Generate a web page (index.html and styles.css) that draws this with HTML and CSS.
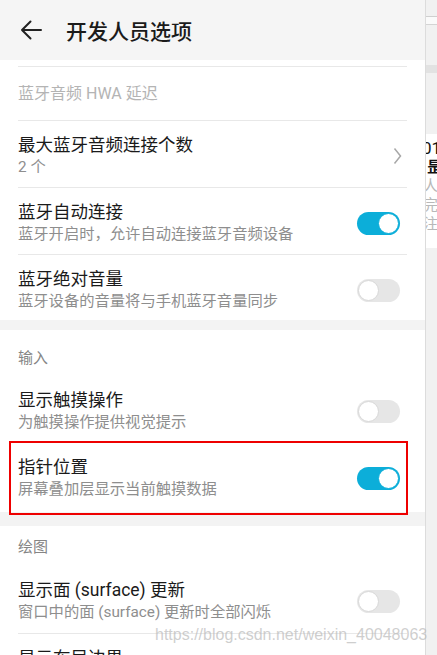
FILE: index.html
```html
<!DOCTYPE html>
<html lang="zh-CN">
<head>
  <meta charset="UTF-8">
  <meta name="viewport" content="width=device-width, initial-scale=1.0">
  <title>开发人员选项</title>
  <link rel="stylesheet" href="styles.css">
</head>
<body>
  <div class="screen">
    <div class="phone">
      <header class="topbar">
        <svg class="back" width="22" height="20" viewBox="0 0 22 20">
          <path d="M21 10H2 M10.5 1.5 L2 10 L10.5 18.5" fill="none" stroke="#222" stroke-width="2" stroke-linecap="round" stroke-linejoin="round"/>
        </svg>
        <h1>开发人员选项</h1>
      </header>

      <div class="card first">
        <div class="row disabled">
          <div class="text"><div class="title">蓝牙音频 HWA 延迟</div></div>
        </div>
        <div class="row">
          <div class="text">
            <div class="title">最大蓝牙音频连接个数</div>
            <div class="sub">2 个</div>
          </div>
          <svg class="chevron" width="9" height="18" viewBox="0 0 9 18">
            <path d="M1.5 1.5 L7.5 9 L1.5 16.5" fill="none" stroke="#a8a8a8" stroke-width="1.5"/>
          </svg>
        </div>
        <div class="row">
          <div class="text">
            <div class="title">蓝牙自动连接</div>
            <div class="sub">蓝牙开启时，允许自动连接蓝牙音频设备</div>
          </div>
          <span class="switch on"></span>
        </div>
        <div class="row last">
          <div class="text">
            <div class="title">蓝牙绝对音量</div>
            <div class="sub">蓝牙设备的音量将与手机蓝牙音量同步</div>
          </div>
          <span class="switch"></span>
        </div>
      </div>

      <div class="card input">
        <div class="label">输入</div>
        <div class="row top">
          <div class="text">
            <div class="title">显示触摸操作</div>
            <div class="sub">为触摸操作提供视觉提示</div>
          </div>
          <span class="switch"></span>
        </div>
        <div class="row marked">
          <div class="text">
            <div class="title">指针位置</div>
            <div class="sub">屏幕叠加层显示当前触摸数据</div>
          </div>
          <span class="switch on"></span>
          <div class="highlight"></div>
        </div>
      </div>

      <div class="card draw">
        <div class="label">绘图</div>
        <div class="row top">
          <div class="text">
            <div class="title">显示面 (surface) 更新</div>
            <div class="sub">窗口中的面 (surface) 更新时全部闪烁</div>
          </div>
          <span class="switch"></span>
        </div>
        <div class="row">
          <div class="text">
            <div class="title">显示布局边界</div>
            <div class="sub">显示剪辑边界、边距等。</div>
          </div>
          <span class="switch"></span>
        </div>
      </div>
    </div>

    <div class="side">
      <div class="side-bar"></div>
      <div class="side-band"></div>
      <div class="side-panel">
        <div class="s-num">01</div>
        <div class="s-bold">昰</div>
        <div class="s-grey">人</div>
        <div class="s-grey">完</div>
        <div class="s-grey">注</div>
      </div>
    </div>

    <div class="watermark">https://blog.csdn.net/weixin_40048063</div>
  </div>
</body>
</html>
```

FILE: styles.css
```css
body {
  margin: 0;
  font-family: Roboto, "Noto Sans CJK SC", sans-serif;
  background: #f1f1f1;
}

.screen {
  position: relative;
  display: flex;
  width: 437px;
  height: 655px;
  overflow: hidden;
}

.phone {
  width: 425px;
  flex-shrink: 0;
  background: #f3f3f3;
}

/* top bar */
.topbar {
  height: 60px;
  display: flex;
  align-items: center;
  padding-left: 20px;
  background: #f5f5f5;
}

.topbar .back {
  margin-right: 24px;
}

.topbar h1 {
  margin: 0;
  font-size: 21px;
  font-weight: 500;
  color: #1b1b1b;
}

/* cards + rows */
.card {
  background: #fff;
}

.card.first {
  padding-top: 6px;
  margin-bottom: 10px;
}

.card.input {
  margin-bottom: 14px;
}

.label {
  padding: 18px 18px 7px;
  line-height: 20px;
  font-size: 15px;
  color: #858585;
}

.card.draw .label {
  padding: 11px 18px 8px;
}

.row {
  position: relative;
  display: flex;
  align-items: center;
  margin: 0 18px;
  padding: 13px 0 9px;
  border-top: 1px solid #e8e8e8;
}

.row.top {
  border-top: none;
  padding-top: 14px;
}

.card.draw .row.top {
  padding-bottom: 10px;
}

.row.last {
  padding-bottom: 8px;
}

.row.marked {
  padding-bottom: 12px;
}

.row.disabled {
  padding: 16px 0 15px;
}

.text {
  flex: 1;
}

.title {
  font-size: 17.5px;
  line-height: 22px;
  color: #1a1a1a;
}

.sub {
  font-size: 15.3px;
  line-height: 22px;
  color: #8e8e8e;
}

.row.disabled .title {
  font-size: 16px;
  color: #b4b4b4;
}

.chevron {
  margin-right: 5px;
}

/* switches */
.switch {
  position: relative;
  width: 43px;
  height: 23px;
  margin-right: 7px;
  border-radius: 12px;
  background: #e6e6e6;
}

.switch::after {
  content: "";
  position: absolute;
  top: 1px;
  left: 1px;
  width: 19px;
  height: 19px;
  border-radius: 50%;
  background: #fff;
  border: 1px solid #d8d8d8;
}

.switch.on {
  background: #0caed9;
}

.switch.on::after {
  left: auto;
  right: 1px;
  border-color: #0caed9;
}

/* red annotation box */
.highlight {
  position: absolute;
  top: -2px;
  left: -9px;
  right: -1px;
  bottom: -3px;
  border: 2.5px solid #ee0000;
  pointer-events: none;
}

/* neighbouring window strip */
.side {
  position: relative;
  flex: 1;
  border-left: 1px solid #dcdcdc;
  background: #f1f1f1;
}

.side-bar {
  height: 7px;
  margin-top: 16px;
  border-top: 1px solid #cfcfcf;
  border-bottom: 1px solid #d4d4d4;
  background: #fafafa;
}

.side-band {
  height: 8px;
  margin-top: 40px;
  background: #e2e2e2;
}

.side-panel {
  margin-top: 61px;
  height: 110px;
  background: #fff;
  overflow: hidden;
  padding-top: 4px;
  font-size: 15px;
  line-height: 19px;
  white-space: nowrap;
}

.s-num {
  margin-left: -4px;
  color: #111;
  font-size: 17px;
  line-height: 20px;
}

.s-bold {
  margin-left: 1px;
  color: #111;
  font-weight: bold;
}

.s-grey {
  margin-left: -3px;
  color: #b8b8b8;
}

.watermark {
  position: absolute;
  left: 155px;
  top: 626px;
  font-family: "Liberation Sans", sans-serif;
  font-size: 16px;
  color: rgba(185, 185, 185, 0.7);
  white-space: nowrap;
  pointer-events: none;
}
```
